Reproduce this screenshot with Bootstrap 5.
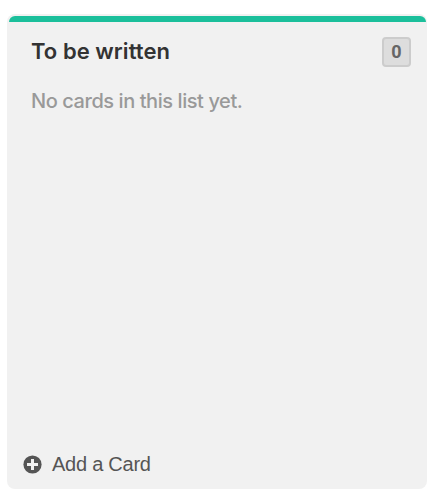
<!DOCTYPE html>
<html lang="en">
<head>
<meta charset="utf-8">
<meta name="viewport" content="width=device-width, initial-scale=1">
<title>To be written</title>
<link href="https://cdn.jsdelivr.net/npm/bootstrap@5.3.0/dist/css/bootstrap.min.css" rel="stylesheet">
<style>
body { background: #fff; padding: 14px 9px 5px 7px; }
.board-list { height: 475px; background: #f1f1f1; border-radius: 8px; padding: 2px 1px 0 2px; font-family: Inter, "Open Sans", sans-serif; }
.list-accent { height: 6px; background: #1bbf9b; border-radius: 6px 6px 0 0; }
.list-head { padding: 15px 15px 0 22px; }
.list-title { font-size: 22px; line-height: 28px; font-weight: 600; letter-spacing: .05px; color: #333; }
.count { width: 29px; height: 30px; background: #ddd; border: 2px solid #ccc; border-radius: 4px; color: #666; font: 700 18px/1 Roboto, sans-serif; }
.empty-note { padding: 20px 22px 0; font-size: 20px; line-height: 28px; font-weight: 450; letter-spacing: -.43px; color: #999; }
.add-card { padding: 0 14px 11px; gap: 10px; font: 20px/28px "Liberation Sans", Arial, sans-serif; letter-spacing: -.25px; color: #555; }
</style>
</head>
<body>
<section class="board-list d-flex flex-column">
  <div class="list-accent"></div>
  <header class="list-head d-flex justify-content-between">
    <h2 class="list-title m-0 text-nowrap">To be written</h2>
    <span class="count d-flex align-items-center justify-content-center">0</span>
  </header>
  <p class="empty-note m-0 text-nowrap">No cards in this list yet.</p>
  <a class="add-card mt-auto d-flex align-items-center text-decoration-none" href="#">
    <svg width="19" height="19" viewBox="0 0 19 19" aria-hidden="true"><circle cx="9.5" cy="9.5" r="9.1" fill="#555"/><path d="M8 4h3v4h4v3h-4v4H8v-4H4V8h4z" fill="#f1f1f1"/></svg>
    <span>Add a Card</span>
  </a>
</section>
<script src="https://cdn.jsdelivr.net/npm/bootstrap@5.3.0/dist/js/bootstrap.bundle.min.js"></script>
</body>
</html>
